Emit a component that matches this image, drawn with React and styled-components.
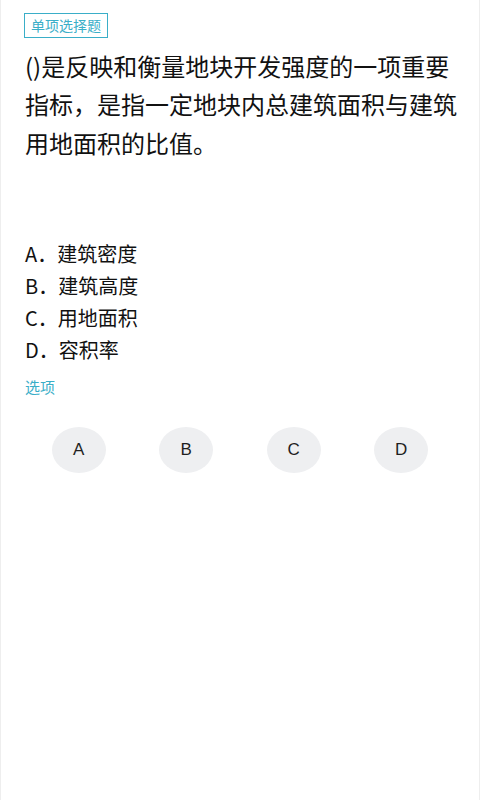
import React from "react"
import styled, { createGlobalStyle } from "styled-components"

const GlobalStyle = createGlobalStyle`
  html, body {
    margin: 0;
    padding: 0;
    background: #fff;
  }
  body {
    font-family: "Noto Sans CJK SC", "Noto Sans", sans-serif;
    color: #1c1c1c;
  }
`

const Page = styled.div`
  box-sizing: border-box;
  min-height: 800px;
  padding: 12px 18px 0 24px;
  border-left: 1px solid #eeeeee;
  border-right: 1px solid #eeeeee;
`

const TypeTag = styled.div`
  display: inline-flex;
  align-items: center;
  box-sizing: border-box;
  height: 25px;
  padding: 0 6px;
  border: 1.5px solid #3aaec8;
  color: #3aaec8;
  font-size: 14px;
  line-height: 1;
  margin-left: -1px;
`

const Question = styled.div`
  margin-top: 9px;
  font-size: 24px;
  line-height: 38.5px;
  color: #111;
`

const OptionList = styled.div`
  margin-top: 76px;
  display: flex;
  flex-direction: column;
`

const Option = styled.div`
  font-size: 20px;
  line-height: 32px;
  color: #111;
`

const SectionLabel = styled.div`
  margin-top: 9px;
  font-size: 15px;
  line-height: 24px;
  color: #3aaec8;
`

const AnswerRow = styled.div`
  margin-top: 28px;
  margin-right: 6px;
  display: grid;
  grid-template-columns: repeat(4, 1fr);
`

const AnswerButton = styled.button`
  justify-self: center;
  width: 54px;
  height: 46px;
  border: none;
  border-radius: 50%;
  background: #eeeff1;
  color: #1f1f1f;
  font-family: "Liberation Sans", Arial, sans-serif;
  font-size: 17px;
  padding: 0;
  cursor: pointer;
`

const options = [
  { key: "A", text: "建筑密度" },
  { key: "B", text: "建筑高度" },
  { key: "C", text: "用地面积" },
  { key: "D", text: "容积率" },
]

export default function App() {
  return (
    <>
      <GlobalStyle />
      <Page>
        <TypeTag>单项选择题</TypeTag>
        <Question>
          ()是反映和衡量地块开发强度的一项重要指标，是指一定地块内总建筑面积与建筑用地面积的比值。
        </Question>
        <OptionList>
          {options.map(o => (
            <Option key={o.key}>
              {o.key}．{o.text}
            </Option>
          ))}
        </OptionList>
        <SectionLabel>选项</SectionLabel>
        <AnswerRow>
          {options.map(o => (
            <AnswerButton key={o.key}>{o.key}</AnswerButton>
          ))}
        </AnswerRow>
      </Page>
    </>
  )
}
